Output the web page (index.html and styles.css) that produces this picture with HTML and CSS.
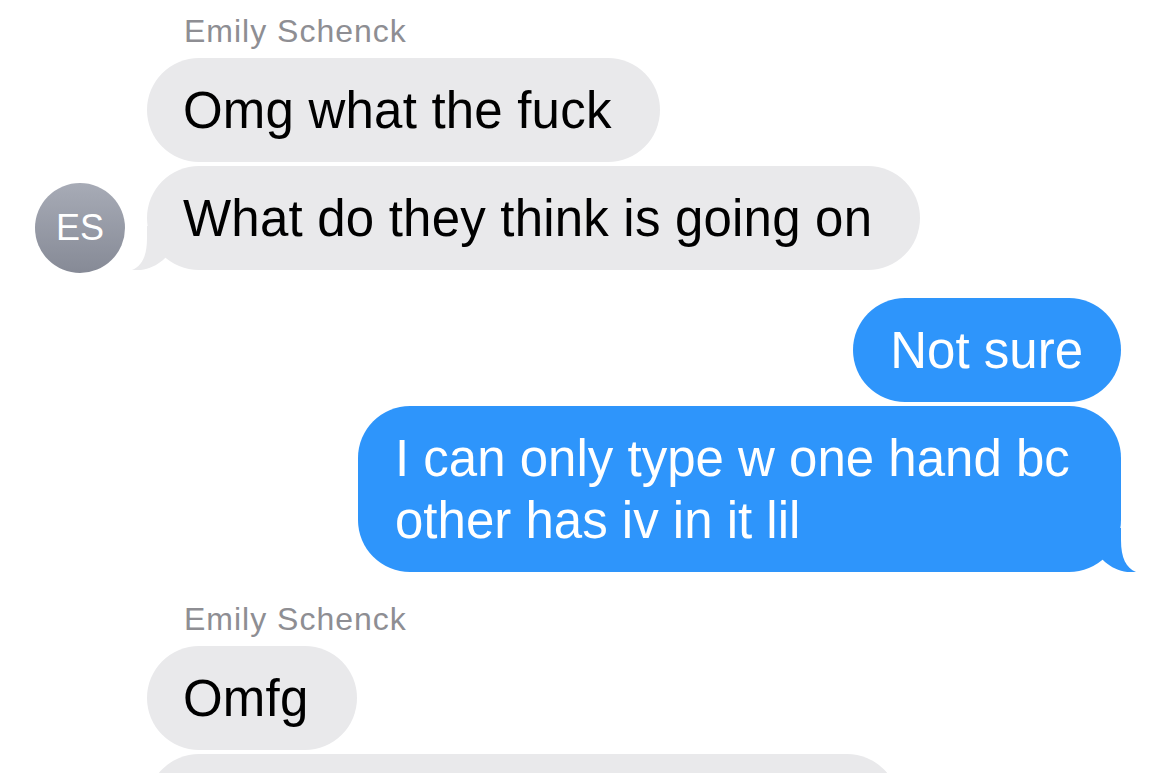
FILE: index.html
```html
<!DOCTYPE html>
<html lang="en">
<head>
<meta charset="utf-8">
<title>Messages</title>
<link rel="stylesheet" href="styles.css">
</head>
<body>
<div class="thread">
  <div class="group incoming">
    <div class="sender">Emily Schenck</div>
    <div class="row">
      <div class="slot"></div>
      <div class="bubble grey">Omg what the fuck</div>
    </div>
    <div class="row">
      <div class="slot"><div class="avatar">ES</div></div>
      <div class="bubble grey">What do they think is going on<svg class="tail tail-left" viewBox="0 0 45 44" width="45" height="44"><path d="M15 0 L15 12 C15 30 10 40 0 44 C11 45.5 23 41 31 34 L45 20 L45 0 Z"/></svg></div>
    </div>
  </div>

  <div class="group outgoing">
    <div class="row">
      <div class="bubble blue">Not sure</div>
    </div>
    <div class="row">
      <div class="bubble blue">I can only type w one hand bc other has iv in it lil<svg class="tail tail-right" viewBox="0 0 45 44" width="45" height="44"><path d="M15 0 L15 12 C15 30 10 40 0 44 C11 45.5 23 41 31 34 L45 20 L45 0 Z"/></svg></div>
    </div>
  </div>

  <div class="group incoming second">
    <div class="sender">Emily Schenck</div>
    <div class="row">
      <div class="slot"></div>
      <div class="bubble grey">Omfg</div>
    </div>
    <div class="row">
      <div class="slot"></div>
      <div class="bubble grey clipped"></div>
    </div>
  </div>
</div>
</body>
</html>
```
FILE: styles.css
```css
html, body {
  margin: 0;
  padding: 0;
  background: #ffffff;
}

body {
  font-family: "Liberation Sans", Arial, sans-serif;
  -webkit-font-smoothing: antialiased;
}

.thread {
  box-sizing: border-box;
  height: 773px;
  overflow: hidden;
  display: flex;
  flex-direction: column;
  padding: 13px 49px 0 0;
}

.group {
  display: flex;
  flex-direction: column;
  gap: 4px;
  flex: none;
}

.group.outgoing {
  margin-top: 28px;
  align-items: flex-end;
}

.group.second {
  margin-top: 29px;
}

.sender {
  padding-left: 184px;
  font-size: 32px;
  line-height: 36px;
  letter-spacing: 1px;
  color: #8e8e93;
  margin-bottom: 5px;
}

.row {
  display: flex;
  align-items: flex-end;
}

.slot {
  width: 147px;
  flex: none;
  display: flex;
  align-items: flex-end;
}

.avatar {
  width: 90px;
  height: 90px;
  margin-left: 35px;
  margin-bottom: -3px;
  border-radius: 50%;
  background: linear-gradient(to bottom, #a7abb6, #868a96);
  color: #ffffff;
  font-size: 36px;
  line-height: 90px;
  text-align: center;
}

.bubble {
  position: relative;
  box-sizing: border-box;
  min-height: 104px;
  padding: 22px 48px 20px 36px;
  border-radius: 52px;
  font-size: 51px;
  line-height: 62px;
}

.bubble.grey {
  background: #e9e9eb;
  color: #000000;
  max-width: 790px;
  letter-spacing: 0.2px;
}

.bubble.blue {
  background: #2e95fb;
  color: #ffffff;
  padding: 22px 38px 20px 37px;
  max-width: 763px;
}

.bubble.clipped {
  width: 752px;
  height: 104px;
  flex: none;
}

.tail {
  position: absolute;
  bottom: 0;
  display: block;
}

.tail-left {
  left: -15px;
  fill: #e9e9eb;
}

.tail-right {
  right: -15px;
  fill: #2e95fb;
  transform: scaleX(-1);
}
```
